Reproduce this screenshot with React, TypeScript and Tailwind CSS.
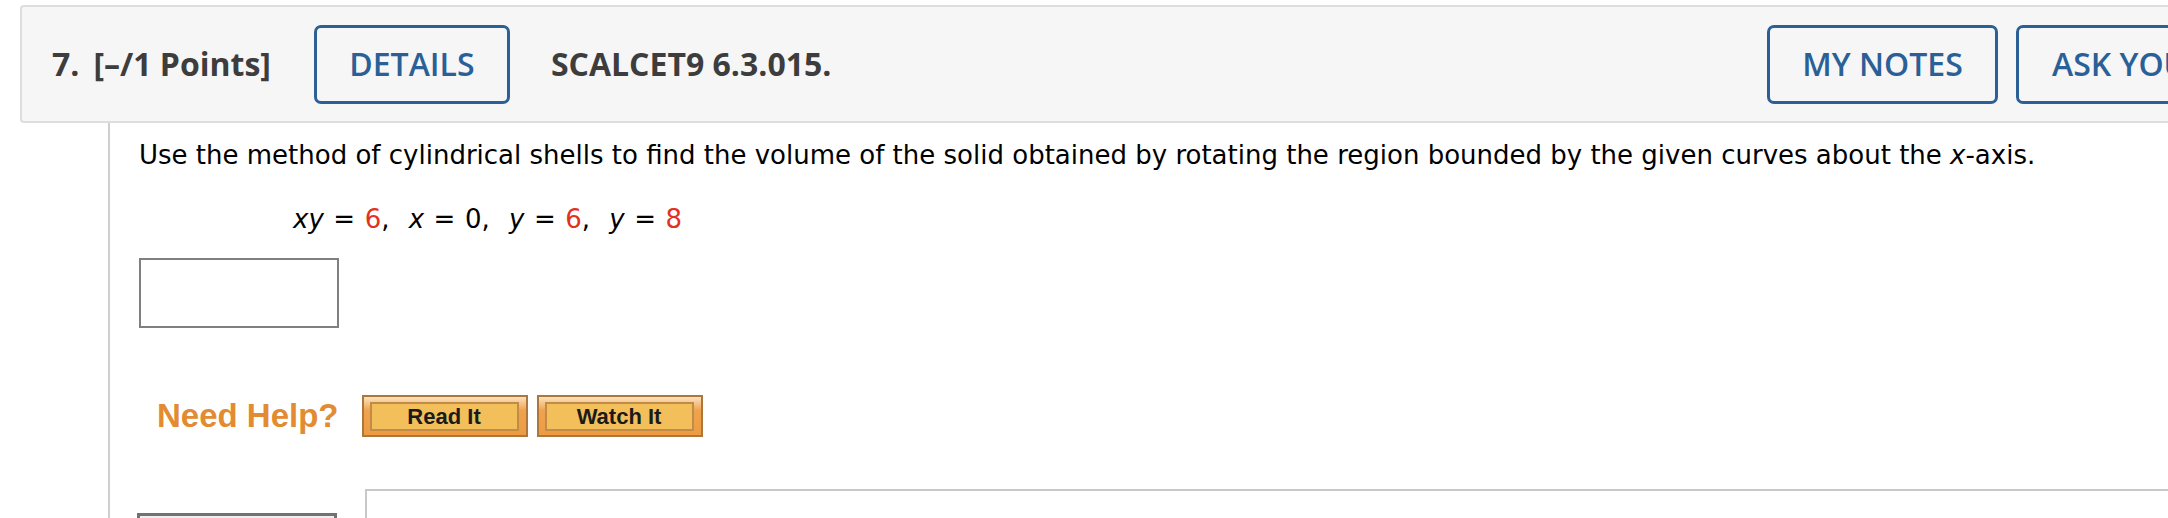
import React from "react";

const openSans = { fontFamily: '"Open Sans", "Noto Sans", sans-serif' };

const OutlineButton = ({ label, width }: { label: string; width: string }) => (
  <div
    className={`${width} h-[79px] shrink-0 flex items-center justify-center rounded-[7px] border-[3px] border-[#2b6096] text-[32px] font-semibold text-[#2b6096] whitespace-nowrap`}
  >
    {label}
  </div>
);

const HelpButton = ({ label }: { label: string }) => (
  <div className="w-[166px] h-[42px] shrink-0 border-2 border-[#ad773b] bg-linear-to-b from-[#fbe1bd] from-0% via-[#efa34d] via-35% to-[#ec9b43] pt-[5px] pb-[4px] pl-[6px] pr-[7px]">
    <div className="h-full flex items-center justify-center border-2 border-[#c18c47] bg-[#f2bf5b] text-[22px] font-bold text-[#1b1b1b] font-['Liberation_Sans',Arial,sans-serif] leading-none">
      {label}
    </div>
  </div>
);

export default function App() {
  return (
    <div className="w-[2168px] h-[518px] overflow-hidden bg-white pt-[5px]">
      {/* question header */}
      <div
        className="ml-[20px] w-[2460px] h-[118px] flex items-center rounded-[4px] border-2 border-[#dedede] bg-[#f6f6f6] pl-[30px]"
        style={openSans}
      >
        <div className="w-[1715px] shrink-0 flex items-center">
          <span className="text-[32px] font-bold text-[#3d3d3d] whitespace-nowrap">7.</span>
          <span className="ml-[14px] text-[32px] font-bold text-[#3d3d3d] whitespace-nowrap">
            [–/1 Points]
          </span>
          <div className="ml-[43px]">
            <OutlineButton label="DETAILS" width="w-[196px]" />
          </div>
          <span className="ml-[41px] text-[32px] font-bold text-[#3d3d3d] whitespace-nowrap">
            SCALCET9 6.3.015.
          </span>
        </div>
        <div className="flex gap-[18px]">
          <OutlineButton label="MY NOTES" width="w-[231px]" />
          <OutlineButton label="ASK YOUR TEACHER" width="px-[33px]" />
        </div>
      </div>

      {/* question body */}
      <div className="ml-[108px] w-[2200px] h-[400px] border-l-2 border-[#cfcfcf] pl-[29px] pt-[14px] font-['DejaVu_Sans',Verdana,sans-serif] text-black">
        <p className="text-[26px] leading-[36px] whitespace-nowrap">
          Use the method of cylindrical shells to find the volume of the solid obtained by rotating the region bounded by the given curves about the <i>x</i>-axis.
        </p>
        <p className="mt-[28px] pl-[154px] text-[26px] leading-[36px] whitespace-pre [word-spacing:1.3px]">
          <i>xy</i> = <span className="text-[#e2321f]">6</span>,{"  "}<i>x</i> = 0,{"  "}<i>y</i> ={" "}
          <span className="text-[#e2321f]">6</span>,{"  "}<i>y</i> = <span className="text-[#e2321f]">8</span>
        </p>
        <div className="mt-[21px] w-[200px] h-[70px] border-2 border-[#808080] bg-white" />

        <div className="mt-[67px] flex items-center">
          <span className="ml-[18px] mr-[23px] text-[33px] font-bold text-[#e38b30] font-['Liberation_Sans',Arial,sans-serif] leading-[38px]">
            Need Help?
          </span>
          <HelpButton label="Read It" />
          <div className="ml-[9px]">
            <HelpButton label="Watch It" />
          </div>
        </div>

        <div className="mt-[52px] flex items-start">
          <div className="ml-[-2px] mt-[24px] w-[200px] h-[60px] border-[3px] border-[#727272] bg-[#efefef]" />
          <div className="ml-[28px] flex-1 h-[120px] border-2 border-[#c8c8c8] bg-white" />
        </div>
      </div>
    </div>
  );
}
